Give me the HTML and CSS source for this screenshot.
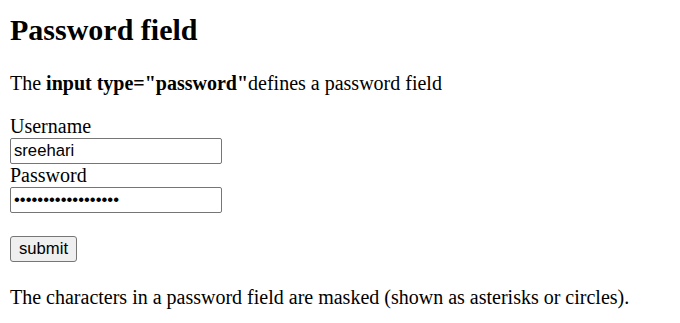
FILE: index.html
```html
<!DOCTYPE html>
<html lang="en">
<head>
  <meta charset="UTF-8">
  <title>Password field</title>
  <link rel="stylesheet" href="styles.css">
</head>
<body>

<h2>Password field</h2>

<p>The <b>input type="password"</b>defines a password field</p>

<form action="">
  <label for="username">Username</label><br>
  <input type="text" id="username" name="username" value="sreehari"><br>
  <label for="pwd">Password</label><br>
  <input type="password" id="pwd" name="pwd" value="sreeharisreehari12"><br><br>
  <input type="submit" value="submit">
</form>

<p>The characters in a password field are masked (shown as asterisks or circles).</p>

</body>
</html>
```

FILE: styles.css
```css
/* Page at 125% */
body {
  font-family: "Liberation Serif", "Times New Roman", serif;
  font-size: 20px;
  margin: 0 10px 10px;
  padding-top: 1px;
  color: #000;
  background: #fff;
}

h2 {
  font-size: 30px;
  font-weight: bold;
  margin: 12px 0 25px;
}

p {
  margin: 20px 0;
}

form {
  margin-bottom: 24px;
}

/* Champs du formulaire */
input[type="text"],
input[type="password"] {
  font-family: "Liberation Sans", Arial, sans-serif;
  font-size: 16.67px;
  width: 212px;
  height: 26px;
  box-sizing: border-box;
  padding: 1px 3px;
  border: 1px solid #767676;
  border-radius: 2px;
  background: #fff;
  color: #000;
}

input[type="submit"] {
  font-family: "Liberation Sans", Arial, sans-serif;
  font-size: 16.67px;
  height: 26px;
  padding: 1px 8px;
  border: 1px solid #767676;
  border-radius: 3px;
  background-color: #efefef;
  color: #000;
}
```
